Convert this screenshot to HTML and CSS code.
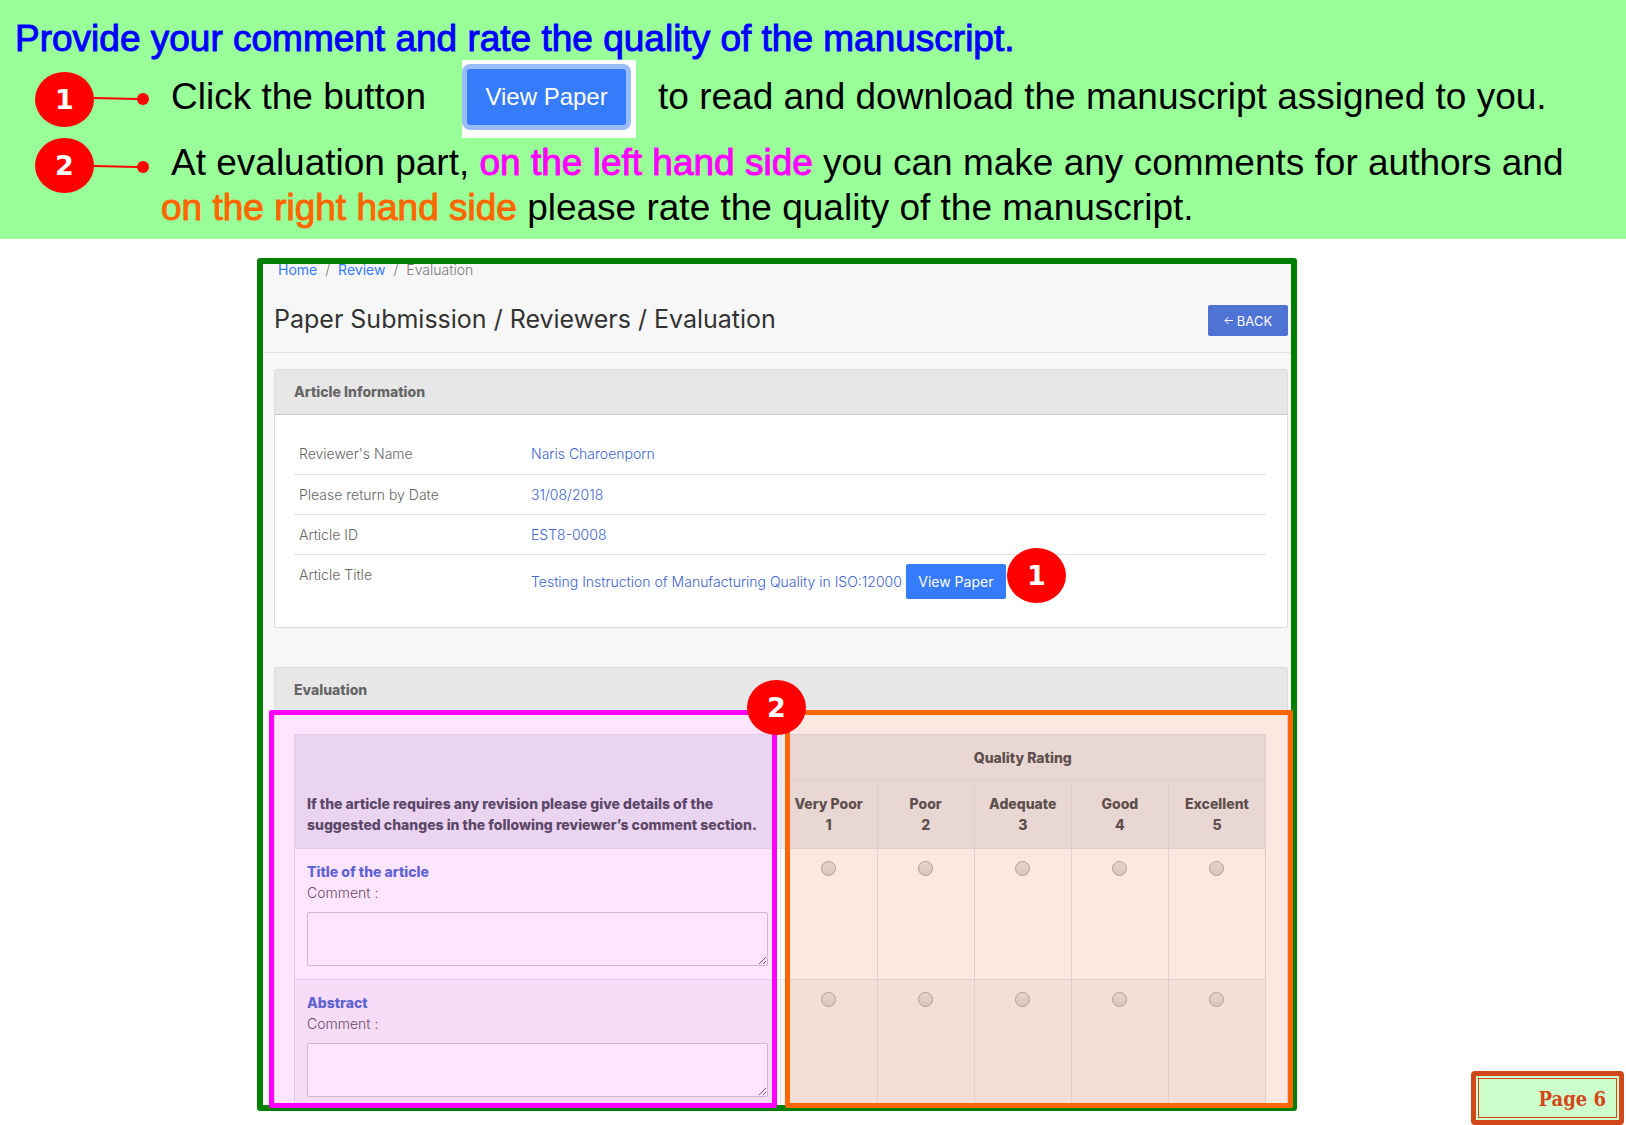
FILE: index.html
```html
<!DOCTYPE html>
<html lang="en">
<head>
<meta charset="utf-8">
<title>Reviewer guide - Page 6</title>
<link rel="stylesheet" href="styles.css">
</head>
<body>
<header class="banner">
  <h1 class="banner-title">Provide your comment and rate the quality of the manuscript.</h1>
  <div class="step step-first">
    <span class="marker">1</span>
    <svg class="pointer" width="56" height="14" viewBox="0 0 56 14"><path d="M0 6 L44 7" stroke="#f00" stroke-width="2"/><circle cx="49" cy="7" r="6" fill="#f00"/></svg>
    <p class="step-text">Click the button</p>
    <span class="button-shot"><button class="view-large" type="button">View Paper</button></span>
    <p class="step-text">to read and download the manuscript assigned to you.</p>
  </div>
  <div class="step step-second">
    <span class="marker">2</span>
    <svg class="pointer" width="56" height="14" viewBox="0 0 56 14"><path d="M0 6 L44 7" stroke="#f00" stroke-width="2"/><circle cx="49" cy="7" r="6" fill="#f00"/></svg>
    <p class="step-text">At evaluation part, <strong class="left-side">on the left hand side</strong> you can make any comments for authors and <br><strong class="right-side">on the right hand side</strong> please rate the quality of the manuscript.</p>
  </div>
</header>

<div class="stage">
  <main class="frame">
    <nav class="breadcrumb" aria-label="Breadcrumb">
      <a href="#home">Home</a><span>/</span><a href="#review">Review</a><span>/</span><span>Evaluation</span>
    </nav>
    <div class="title-bar">
      <h2>Paper Submission / Reviewers / Evaluation</h2>
      <button class="back" type="button"><svg width="9" height="9" viewBox="0 0 9 9" fill="none" stroke="#fff"><path d="M9 4.500H1M4.500 1L1 4.500L4.500 8"/></svg>BACK</button>
    </div>

    <section class="card info-card">
      <h3>Article Information</h3>
      <div class="card-body">
        <table class="info">
          <tr><th scope="row">Reviewer's Name</th><td>Naris Charoenporn</td></tr>
          <tr><th scope="row">Please return by Date</th><td>31/08/2018</td></tr>
          <tr><th scope="row">Article ID</th><td>EST8-0008</td></tr>
          <tr class="title-row"><th scope="row">Article Title</th><td><div class="paper"><span>Testing Instruction of Manufacturing Quality in ISO:12000</span><button class="view" type="button">View Paper</button><span class="marker marker-paper">1</span></div></td></tr>
        </table>
      </div>
    </section>

    <section class="card eval-card">
      <h3>Evaluation</h3>
      <div class="card-body">
        <table class="rating">
          <colgroup><col class="col-comment"><col span="5" class="col-score"></colgroup>
          <thead>
            <tr><th rowspan="2" class="hint">If the article requires any revision please give details of the suggested changes in the following reviewer’s comment section.</th><th colspan="5">Quality Rating</th></tr>
            <tr class="scores"><th>Very Poor<br>1</th><th>Poor<br>2</th><th>Adequate<br>3</th><th>Good<br>4</th><th>Excellent<br>5</th></tr>
          </thead>
          <tbody>
            <tr>
              <td><strong>Title of the article</strong><label for="c1">Comment :</label><textarea id="c1"></textarea></td>
              <td><input type="radio" name="q1" aria-label="Title: Very Poor"></td>
              <td><input type="radio" name="q1" aria-label="Title: Poor"></td>
              <td><input type="radio" name="q1" aria-label="Title: Adequate"></td>
              <td><input type="radio" name="q1" aria-label="Title: Good"></td>
              <td><input type="radio" name="q1" aria-label="Title: Excellent"></td>
            </tr>
            <tr>
              <td><strong>Abstract</strong><label for="c2">Comment :</label><textarea id="c2"></textarea></td>
              <td><input type="radio" name="q2" aria-label="Abstract: Very Poor"></td>
              <td><input type="radio" name="q2" aria-label="Abstract: Poor"></td>
              <td><input type="radio" name="q2" aria-label="Abstract: Adequate"></td>
              <td><input type="radio" name="q2" aria-label="Abstract: Good"></td>
              <td><input type="radio" name="q2" aria-label="Abstract: Excellent"></td>
            </tr>
          </tbody>
        </table>
      </div>
      <div class="highlight highlight-left"></div>
      <div class="highlight highlight-right"></div>
      <span class="marker marker-eval">2</span>
    </section>
  </main>
  <footer class="page-number"><span>Page 6</span></footer>
</div>
</body>
</html>
```
FILE: styles.css
```css
* {
  box-sizing: border-box;
}

body {
  margin: 0;
  background: #fff;
  color: #000;
  font-family: Inter, "Open Sans", sans-serif;
  font-size: 14px;
  line-height: 21px;
}

h1, h2, h3, p {
  margin: 0;
}

button {
  font-family: inherit;
  color: #fff;
  border: 0;
  padding: 0;
}

/* Instruction banner */
.banner {
  background: #9f9;
  height: 239px;
  padding: 18px 15px 0;
  font-family: "Liberation Sans", Arial, sans-serif;
  font-size: 37px;
  line-height: 42px;
}

.banner-title {
  font-size: 37px;
  font-weight: 400;
  color: #00f;
  -webkit-text-stroke: 1px #00f;
}

.step {
  display: flex;
  padding-left: 20px;
  white-space: nowrap;
}

.step-first {
  height: 78px;
  align-items: center;
}

.step-first .step-text {
  margin-left: 21px;
  padding-bottom: 4px;
}

.step-second .step-text {
  margin-left: 11px;
  padding-top: 2px;
  line-height: 45px;
  text-indent: 10px;
}

.pointer {
  flex: none;
}

.step-second .pointer {
  margin-top: 22px;
}

.left-side,
.right-side {
  font-weight: 400;
}

.left-side {
  color: #f0f;
  -webkit-text-stroke: 1px #f0f;
}

.right-side {
  color: #f60;
  -webkit-text-stroke: 1px #f60;
}

.marker {
  flex: none;
  width: 59px;
  height: 55px;
  border-radius: 50%;
  background: #f00;
  color: #fff;
  font: bold 27px/55px "DejaVu Sans", Verdana, sans-serif;
  text-align: center;
}

.button-shot {
  width: 174px;
  height: 78px;
  margin: 0 1px 0 36px;
  padding: 4px 5px 8px 0;
  background: #fff;
}

.view-large {
  display: block;
  width: 100%;
  height: 66px;
  border: 5px solid #9bbcfb;
  border-radius: 8px;
  background: #367bfa;
  font-size: 24px;
  font-weight: 300;
}

/* Area below the banner */
.stage {
  display: flex;
  align-items: flex-start;
  padding: 19px 2px 0 257px;
}

.frame {
  flex: 1;
  margin: 0 174px 14px 0;
  border: 6px solid #008000;
  border-radius: 3px;
  background: #f7f7f7;
}

.breadcrumb {
  display: flex;
  gap: 8px;
  height: 36px;
  padding-left: 15px;
  line-height: 12px;
  color: #777;
  font-weight: 300;
}

.breadcrumb a {
  color: #367bfa;
  text-decoration: none;
  font-weight: 400;
}

.title-bar {
  display: flex;
  justify-content: space-between;
  align-items: flex-start;
  height: 53px;
  padding: 5px 3px 0 11px;
  border-bottom: 1px solid #e2e2e2;
}

.title-bar h2 {
  font-size: 25px;
  line-height: 28px;
  font-weight: 400;
  color: #333;
}

.back {
  display: flex;
  justify-content: center;
  align-items: center;
  gap: 4px;
  width: 80px;
  height: 31px;
  border-radius: 2px;
  background: #4e73d4;
  font-size: 13px;
}

.card {
  margin: 16px 3px 0 11px;
  border: 1px solid #dcdcdc;
  border-radius: 3px;
  background: #fff;
}

.card h3 {
  height: 45px;
  padding: 0 19px;
  border-bottom: 1px solid #c6c6c6;
  background: #e7e7e7;
  font-size: 14px;
  line-height: 44px;
  font-weight: 800;
  color: #666;
}

.card-body {
  padding: 19px 21px 19px 19px;
}

.info {
  width: 100%;
  border-collapse: collapse;
}

.info th,
.info td {
  height: 40px;
  padding: 9px 5px 8px;
  border-bottom: 1px solid #e2e2e2;
  vertical-align: top;
  text-align: left;
}

.info th {
  width: 232px;
  font-weight: 300;
  color: #666;
}

.info td {
  color: #4065d0;
  font-weight: 300;
}

.info .title-row th,
.info .title-row td {
  height: 54px;
  border-bottom: 0;
  padding-bottom: 0;
}

.info .title-row td {
  padding-top: 8px;
}

.paper {
  display: flex;
  gap: 4px;
  height: 37px;
  align-items: center;
  white-space: nowrap;
}

.view {
  width: 100px;
  height: 35px;
  border-radius: 2px;
  background: #367bfa;
  font-size: 14px;
}

.marker-paper {
  margin: -20px 0 -8px -3px;
}

.eval-card {
  position: relative;
  margin-top: 39px;
  border-bottom: 0;
}

.eval-card .card-body {
  padding: 21px 21px 0 19px;
}

.rating {
  width: 100%;
  table-layout: fixed;
  border-collapse: collapse;
  color: #555;
}

.col-comment {
  width: 50%;
}

.col-score {
  width: 10%;
}

.rating th,
.rating td {
  border: 1px solid #dee2e6;
  padding: 12px 12px 13px;
  vertical-align: top;
}

.rating th {
  padding: 12px 2px;
  background: #e9ecef;
  color: #495057;
  font-weight: 800;
}

.rating .scores th {
  padding-bottom: 13px;
}

.rating .hint {
  padding: 12px 12px 13px;
  text-align: left;
  vertical-align: bottom;
}

.rating td {
  text-align: center;
}

.rating td:first-child {
  text-align: left;
}

.rating tbody tr:last-child td {
  border-bottom: 0;
  padding-bottom: 8px;
  background: #f5f5f5;
}

.rating strong,
.rating label {
  display: block;
}

.rating strong {
  color: #4e6fd0;
  font-weight: 800;
}

.rating label {
  font-weight: 300;
}

.rating textarea {
  display: block;
  width: 100%;
  height: 54px;
  margin-top: 9px;
  border: 1px solid #ccc;
  border-radius: 2px;
  background: #fff;
}

.rating input {
  display: block;
  appearance: none;
  width: 15px;
  height: 15px;
  margin: 0 auto;
  border: 1px solid #aaa;
  border-radius: 50%;
  background: linear-gradient(#e8e8e8, #d8d8d8);
}

/* Outlines laid over the evaluation table */
.highlight {
  position: absolute;
  top: 42px;
  bottom: -3px;
  border: 5px solid;
  border-radius: 2px;
  pointer-events: none;
}

.highlight-left {
  left: -6px;
  right: calc(50% + 4px);
  border-color: #f0f;
  background: rgba(255, 0, 255, 0.1);
}

.highlight-right {
  left: calc(50% + 4px);
  right: -6px;
  border-color: #f60;
  background: rgba(235, 75, 15, 0.13);
}

.marker-eval {
  position: absolute;
  top: 12px;
  left: calc(50% - 34px);
}

.page-number {
  align-self: flex-end;
  width: 153px;
  height: 54px;
  padding: 2px;
  border: 5px solid #d2471a;
  border-radius: 4px;
  background: #cfc;
  color: #d2471a;
  font: bold 20px/40px "DejaVu Serif Condensed", "DejaVu Serif", serif;
  text-align: right;
}

.page-number span {
  display: block;
  height: 40px;
  padding-right: 10px;
  border: 1px solid #d2471a;
}
```
